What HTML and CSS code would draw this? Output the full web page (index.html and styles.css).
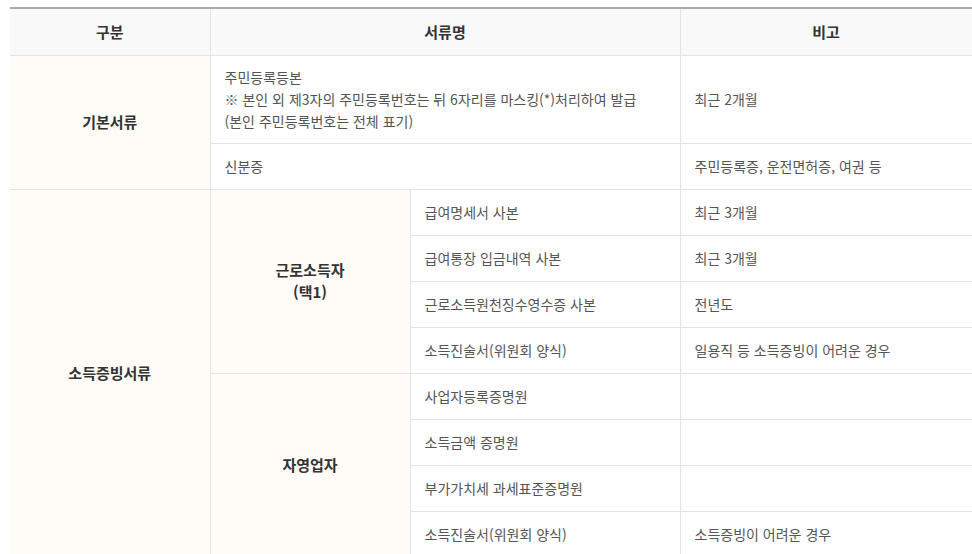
FILE: index.html
```html
<!DOCTYPE html>
<html lang="ko">
<head>
<meta charset="utf-8">
<link rel="stylesheet" href="styles.css">
</head>
<body>
<div class="wrap">
<table class="doc-table">
  <colgroup>
    <col class="c1"><col class="c2"><col class="c3"><col class="c4">
  </colgroup>
  <thead>
    <tr class="head-row">
      <th>구분</th>
      <th colspan="2">서류명</th>
      <th>비고</th>
    </tr>
  </thead>
  <tbody>
    <tr class="tall-row">
      <th class="label" rowspan="2">기본서류</th>
      <td colspan="2">주민등록등본<br>※ 본인 외 제3자의 주민등록번호는 뒤 6자리를 마스킹(*)처리하여 발급<br>(본인 주민등록번호는 전체 표기)</td>
      <td>최근 2개월</td>
    </tr>
    <tr>
      <td colspan="2">신분증</td>
      <td>주민등록증, 운전면허증, 여권 등</td>
    </tr>
    <tr>
      <th class="label" rowspan="8">소득증빙서류</th>
      <th class="label" rowspan="4">근로소득자<br>(택1)</th>
      <td>급여명세서 사본</td>
      <td>최근 3개월</td>
    </tr>
    <tr>
      <td>급여통장 입금내역 사본</td>
      <td>최근 3개월</td>
    </tr>
    <tr>
      <td>근로소득원천징수영수증 사본</td>
      <td>전년도</td>
    </tr>
    <tr>
      <td>소득진술서(위원회 양식)</td>
      <td>일용직 등 소득증빙이 어려운 경우</td>
    </tr>
    <tr>
      <th class="label" rowspan="4">자영업자</th>
      <td>사업자등록증명원</td>
      <td></td>
    </tr>
    <tr>
      <td>소득금액 증명원</td>
      <td></td>
    </tr>
    <tr>
      <td>부가가치세 과세표준증명원</td>
      <td></td>
    </tr>
    <tr>
      <td>소득진술서(위원회 양식)</td>
      <td>소득증빙이 어려운 경우</td>
    </tr>
  </tbody>
</table>
</div>
</body>
</html>
```
FILE: styles.css
```css
html, body {
  margin: 0;
  padding: 0;
  background: #fff;
  overflow: hidden;
}
.wrap {
  padding: 7px 0 0 10px;
}
.doc-table {
  border-collapse: collapse;
  table-layout: fixed;
  width: 962px;
  font-family: "Noto Sans CJK KR", "Noto Sans", sans-serif;
  font-size: 14px;
  color: #555;
  border-top: 2px solid #aaa;
}
.c1 { width: 200px; }
.c2 { width: 200px; }
.c3 { width: 270px; }
.c4 { width: 292px; }
.doc-table th,
.doc-table td {
  border: 1px solid #e3e3e3;
  padding: 0 0 0 14px;
  height: 46px;
  text-align: left;
  vertical-align: middle;
  line-height: 22px;
  box-sizing: border-box;
}
.doc-table tr > :first-child { border-left: none; }
.doc-table .head-row th {
  background: #f9f9f9;
  color: #333;
  font-weight: bold;
  font-size: 15px;
  text-align: center;
  padding: 0;
  height: 47px;
  border-top: none;
}
.doc-table .tall-row td { height: 88px; }
.doc-table th.label {
  background: #fffbf6;
  color: #333;
  font-weight: bold;
  font-size: 15px;
  text-align: center;
  padding: 0;
}
```
